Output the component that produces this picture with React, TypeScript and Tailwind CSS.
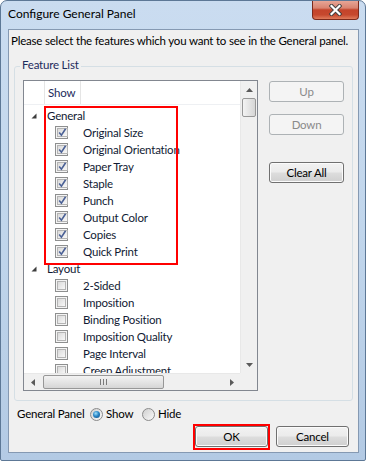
import React from 'react';

type Row =
    | { type: 'group'; label: string }
    | { type: 'item'; label: string; checked: boolean };

const rows: Row[] = [
    { type: 'group', label: 'General' },
    { type: 'item', label: 'Original Size', checked: true },
    { type: 'item', label: 'Original Orientation', checked: true },
    { type: 'item', label: 'Paper Tray', checked: true },
    { type: 'item', label: 'Staple', checked: true },
    { type: 'item', label: 'Punch', checked: true },
    { type: 'item', label: 'Output Color', checked: true },
    { type: 'item', label: 'Copies', checked: true },
    { type: 'item', label: 'Quick Print', checked: true },
    { type: 'group', label: 'Layout' },
    { type: 'item', label: '2-Sided', checked: false },
    { type: 'item', label: 'Imposition', checked: false },
    { type: 'item', label: 'Binding Position', checked: false },
    { type: 'item', label: 'Imposition Quality', checked: false },
    { type: 'item', label: 'Page Interval', checked: false },
    { type: 'item', label: 'Creep Adjustment', checked: false },
];

function CheckBox({ checked }: { checked: boolean }) {
    return (
        <span className="w-[13px] h-[13px] border border-[#8e8f8f] bg-[#f4f4f4] p-px flex shrink-0">
            <span className="flex-1 border border-[#b4b4b4] bg-gradient-to-br from-[#dadada] to-[#f8f8f8] flex items-center justify-center">
                {checked && (
                    <svg width="9" height="9" viewBox="0 0 9 9">
                        <path d="M1.2 4.6 L3.4 7.2 L7.6 0.8" fill="none" stroke="#4b6196" strokeWidth="1.6" />
                    </svg>
                )}
            </span>
        </span>
    );
}

function Radio({ checked }: { checked: boolean }) {
    return (
        <span className="w-[13px] h-[13px] rounded-full border border-[#8b8b8b] bg-gradient-to-br from-[#cfcfcf] to-[#fafafa] flex items-center justify-center shrink-0">
            {checked && (
                <span className="w-[7px] h-[7px] rounded-full bg-[radial-gradient(circle_at_40%_35%,#9fe0fb_0%,#2a86c6_45%,#0f4a80_100%)]" />
            )}
        </span>
    );
}

function Button({ label, disabled, wide }: { label: string; disabled?: boolean; wide?: boolean }) {
    if (disabled) {
        return (
            <div className="h-[21px] w-[75px] rounded-[3px] border border-[#adb2b5] bg-[#f4f4f4] text-[#8a8a8a] flex items-center justify-center leading-[16px]">
                {label}
            </div>
        );
    }
    return (
        <div
            className={`h-[21px] ${wide ? 'w-[75px]' : 'w-[73px]'} rounded-[3px] border border-[#707070] bg-[linear-gradient(#f2f2f2_0%,#ebebeb_48%,#dddddd_52%,#cfcfcf_100%)] shadow-[inset_0_0_0_1px_#fbfbfb] text-black flex items-center justify-center leading-[16px]`}
        >
            {label}
        </div>
    );
}

function Arrow({ dir }: { dir: 'up' | 'down' | 'left' | 'right' }) {
    const paths: Record<string, string> = {
        up: 'M0 4 L3.5 0 L7 4 Z',
        down: 'M0 0 L7 0 L3.5 4 Z',
        left: 'M4 0 L4 7 L0 3.5 Z',
        right: 'M0 0 L4 3.5 L0 7 Z',
    };
    const vertical = dir === 'up' || dir === 'down';
    return (
        <svg width={vertical ? 7 : 4} height={vertical ? 4 : 7} viewBox={vertical ? '0 0 7 4' : '0 0 4 7'}>
            <path d={paths[dir]} fill="#5a5a5a" />
        </svg>
    );
}

export default function App() {
    return (
        <div className="w-[366px] h-[461px] flex flex-col border border-[#5d7896] rounded-t-[7px] rounded-b-[2px] bg-gradient-to-b from-[#cadcf0] via-[#c1d6ec] to-[#b3cae4] pl-[7px] pr-[6px] pb-[7px] font-['Lato','Noto_Sans',sans-serif] text-[11.5px] tracking-[-0.2px] text-black overflow-hidden">
            {/* Title bar */}
            <div className="h-[28px] flex items-start justify-between shrink-0">
                <div className="pt-[5px] leading-[16px] text-[12px] tracking-normal">Configure General Panel</div>
                <div className="-mt-px w-[47px] h-[20px] rounded-b-[4px] border border-[#7c2a1c] border-t-0 bg-[linear-gradient(#e9aa9b_0%,#d98471_42%,#c4442b_52%,#c6482e_78%,#e07c5c_100%)] flex items-center justify-center">
                    <svg width="13" height="12" viewBox="0 0 13 12">
                        <path d="M2.5 2 L10.5 10 M10.5 2 L2.5 10" stroke="#3e3e3e" strokeWidth="4" strokeLinecap="square" />
                        <path d="M2.5 2 L10.5 10 M10.5 2 L2.5 10" stroke="#ffffff" strokeWidth="2.2" strokeLinecap="square" />
                    </svg>
                </div>
            </div>

            {/* Client area */}
            <div className="flex-1 flex flex-col border border-[#8599b2] bg-[#f0f0f0]">
                <p className="pt-[3px] pl-[2px] leading-[16px] whitespace-nowrap">
                    Please select the features which you want to see in the General panel.
                </p>

                <fieldset className="mt-[8px] ml-[5px] w-[339px] border border-[#d5dfe5] rounded-[3px] pl-[5px] pt-[5px] pb-[9px]">
                    <legend className="px-[2px] h-[18px] leading-[16px] text-[#1c2b5c]">Feature List</legend>
                    <div className="flex pl-[3px]">
                        {/* List view */}
                        <div className="w-[235px] h-[311px] border border-[#828790] bg-white flex flex-col">
                            <div className="flex flex-1 min-h-0">
                                <div className="flex-1 min-w-0 overflow-hidden flex flex-col">
                                    <div className="h-[24px] flex shrink-0 border-b border-[#eef0f3] text-[#1c2b5c]">
                                        <div className="w-[21px] border-r border-[#e5e5e5]" />
                                        <div className="w-[36px] border-r border-[#e5e5e5] pl-[3px] leading-[24px]">Show</div>
                                    </div>
                                    <div className="relative pt-[2px]">
                                        {rows.map((row) =>
                                            row.type === 'group' ? (
                                                <div key={row.label} className="h-[17px] flex items-center pl-[7px] text-[#111a33]">
                                                    <svg width="6" height="6" viewBox="0 0 6 6" className="shrink-0">
                                                        <path d="M5.5 0.5 L5.5 5.5 L0.5 5.5 Z" fill="#3d3d3d" />
                                                    </svg>
                                                    <span className="ml-[10px] leading-[17px]">{row.label}</span>
                                                </div>
                                            ) : (
                                                <div key={row.label} className="h-[17px] flex items-center pl-[31px] text-[#111a33]">
                                                    <CheckBox checked={row.checked} />
                                                    <span className="ml-[15px] leading-[17px] whitespace-nowrap">{row.label}</span>
                                                </div>
                                            )
                                        )}
                                        {/* highlight box */}
                                        <div className="absolute left-[20px] top-[1px] w-[134px] h-[159px] border-2 border-[#ff0000]" />
                                    </div>
                                </div>
                                {/* vertical scrollbar */}
                                <div className="w-[17px] flex flex-col bg-[#f0f0f0] border-l border-[#e8e8e8] shrink-0">
                                    <div className="h-[17px] flex items-center justify-center">
                                        <Arrow dir="up" />
                                    </div>
                                    <div className="flex-1">
                                        <div className="mx-px h-[19px] rounded-[2px] border border-[#979797] bg-gradient-to-r from-[#f3f3f3] to-[#d6d6d6]" />
                                    </div>
                                    <div className="h-[17px] flex items-center justify-center">
                                        <Arrow dir="down" />
                                    </div>
                                </div>
                            </div>
                            {/* horizontal scrollbar */}
                            <div className="h-[17px] flex shrink-0">
                                <div className="flex-1 flex items-center bg-[#f0f0f0] border-t border-[#e8e8e8]">
                                    <div className="w-[17px] h-full flex items-center justify-center">
                                        <Arrow dir="left" />
                                    </div>
                                    <div className="ml-[2px] w-[121px] h-[14px] rounded-[2px] border border-[#979797] bg-gradient-to-b from-[#f3f3f3] to-[#d6d6d6] flex items-center justify-center gap-[2px]">
                                        <span className="w-px h-[6px] bg-[#7a7a7a]" />
                                        <span className="w-px h-[6px] bg-[#7a7a7a]" />
                                        <span className="w-px h-[6px] bg-[#7a7a7a]" />
                                    </div>
                                    <div className="flex-1" />
                                    <div className="w-[17px] h-full flex items-center justify-center">
                                        <Arrow dir="right" />
                                    </div>
                                </div>
                                <div className="w-[17px] bg-[#f0f0f0]" />
                            </div>
                        </div>

                        {/* Side buttons */}
                        <div className="ml-[11px] pt-px flex flex-col">
                            <Button label="Up" disabled />
                            <div className="mt-[12px]">
                                <Button label="Down" disabled />
                            </div>
                            <div className="mt-[27px]">
                                <Button label="Clear All" wide />
                            </div>
                        </div>
                    </div>
                </fieldset>

                {/* General panel radio */}
                <div className="mt-[4px] h-[18px] flex items-center pl-[8px]">
                    <span className="w-[73px] leading-[16px] whitespace-nowrap">General Panel</span>
                    <Radio checked />
                    <span className="ml-[3px] w-[36px] leading-[16px]">Show</span>
                    <Radio checked={false} />
                    <span className="ml-[3px] leading-[16px]">Hide</span>
                </div>

                {/* Dialog buttons */}
                <div className="mt-[3px] flex justify-end gap-[8px] pr-[9px]">
                    <div className="relative">
                        <Button label="OK" />
                        <div className="absolute -left-[2px] -top-[2px] -right-[2px] -bottom-[3px] border-2 border-[#ff0000]" />
                    </div>
                    <Button label="Cancel" />
                </div>
            </div>
        </div>
    );
}
